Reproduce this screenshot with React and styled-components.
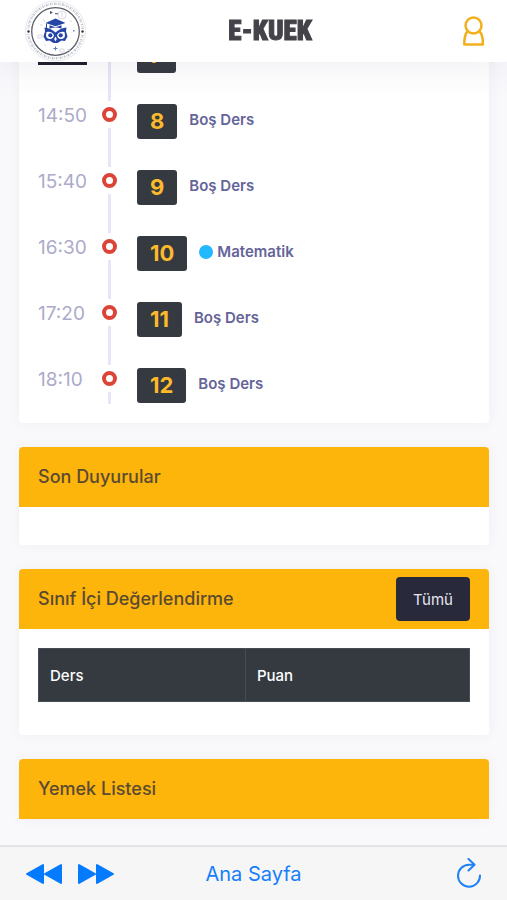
import styled, { createGlobalStyle } from 'styled-components'

const GlobalStyle = createGlobalStyle`
  * {
    box-sizing: border-box;
  }
  body {
    margin: 0;
    background: #f9f9fc;
    font-family: Inter, 'Open Sans', sans-serif;
    color: #646c9a;
  }
  button {
    border: 0;
    padding: 0;
    background: none;
    font: inherit;
    cursor: pointer;
  }
  svg {
    display: block;
  }
`

const Header = styled.header`
  position: fixed;
  top: 0;
  left: 0;
  right: 0;
  z-index: 2;
  height: 62px;
  padding: 0 12px 0 24px;
  display: flex;
  align-items: center;
  justify-content: space-between;
  background: #fff;
  box-shadow: 0 0 40px rgba(82, 63, 105, 0.12);
`

const Brand = styled.h1`
  margin: 0;
  font-family: 'Liberation Sans Narrow', 'Roboto Condensed', Roboto, sans-serif;
  font-size: 27px;
  font-weight: 900;
  line-height: 32px;
  color: #434349;
  -webkit-text-stroke: 1px #434349;
`

const UserButton = styled.button`
  width: 42px;
  height: 42px;
  display: flex;
  align-items: center;
  justify-content: center;
`

const Page = styled.main`
  padding: 0 18px 80px 19px;
  display: flex;
  flex-direction: column;
  gap: 24px;
`

const Card = styled.section`
  background: #fff;
  border-radius: 4px;
  box-shadow: 0 0 13px rgba(82, 63, 105, 0.05);
`

const CardHead = styled.div`
  height: 60px;
  padding: 0 19px;
  display: flex;
  align-items: center;
  justify-content: space-between;
  background: #fdb40b;
  border-radius: 4px 4px 0 0;
`

const CardTitle = styled.h2`
  margin: 0;
  font-size: 18px;
  font-weight: 500;
  line-height: 24px;
  color: #5a4a32;
`

const CardBody = styled.div`
  min-height: 38px;
  padding: ${({ $filled }) => ($filled ? '19px 19px 33px' : '0')};
`

const AllButton = styled.button`
  width: 74px;
  height: 44px;
  border-radius: 4px;
  background: #282a3c;
  color: #e6e6ee;
  font-size: 15px;
`

const Lessons = styled.ol`
  list-style: none;
  margin: 0;
  padding: 35px 19px 19px;
`

const Lesson = styled.li`
  display: grid;
  grid-template-columns: 64px 15px 1fr;
  padding-right: 19px;
`

const Time = styled.time`
  justify-self: start;
  align-self: start;
  height: 30px;
  font-size: 19px;
  line-height: 30px;
  color: #acabc9;
  ${({ $current }) => $current && 'background: #1e1e2d; color: #fff;'}
`

const Rail = styled.div`
  padding-top: 6px;
  display: flex;
  flex-direction: column;
  align-items: center;
  gap: 6px;
`

const Ring = styled.span`
  width: 15px;
  height: 15px;
  border: 4px solid #db4437;
  border-radius: 50%;
`

const Line = styled.span`
  flex: 1;
  width: 3px;
  background: #e6e6f6;
`

const Detail = styled.div`
  padding: 3px 0 28px 20px;
  display: flex;
  align-items: flex-start;
  gap: 12px;

  ${Lesson}:last-child & {
    padding-bottom: 1px;
  }
`

const Badge = styled.span`
  height: 35px;
  padding: 0 13px;
  border-radius: 3px;
  background: #343a40;
  color: #fdb92c;
  font-size: 22px;
  font-weight: 700;
  line-height: 34px;
`

const Subject = styled.span`
  display: flex;
  align-items: center;
  gap: 4px;
  font-size: 15px;
  font-weight: 600;
  line-height: 32px;
  color: #646499;
`

const Dot = styled.span`
  width: 14px;
  height: 14px;
  border-radius: 50%;
  background: #22b9ff;
`

const Table = styled.table`
  width: 100%;
  border-collapse: collapse;
  background: #343a40;
  color: #fff;

  th {
    height: 53px;
    padding: 0 11px;
    border: 1px solid #454d55;
    font-size: 15px;
    font-weight: 500;
    text-align: left;
  }
  th:first-child {
    width: 48%;
  }
`

const Toolbar = styled.footer`
  position: fixed;
  bottom: 0;
  left: 0;
  right: 0;
  z-index: 2;
  height: 55px;
  padding: 0 25px;
  display: grid;
  grid-template-columns: 1fr auto 1fr;
  align-items: center;
  background: #f7f6f7;
  border-top: 2px solid #e4e4e7;
`

const Arrows = styled.nav`
  display: flex;
  gap: 16px;
`

const HomeLink = styled.a`
  font-size: 20px;
  line-height: 28px;
  color: #147efb;
  text-decoration: none;
`

const ReloadButton = styled.button`
  justify-self: end;
`

const Logo = () => (
  <svg width="63" height="62" viewBox="0 0 63 62" role="img" aria-label="Okul logosu">
    <circle cx="31.5" cy="31" r="30" fill="#fff" stroke="#e6e7ec" strokeWidth="1" />
    <circle cx="31.5" cy="31" r="27.3" fill="none" stroke="#c3c5cf" strokeWidth="2.4" strokeDasharray="1.3 .9 .7 1 1.7 .8 .6 1.2" />
    <circle cx="31.5" cy="31.5" r="23.8" fill="#fff" stroke="#5d5f68" strokeWidth="1.3" />
    <circle cx="4.5" cy="31.5" r="2.4" fill="#fff" />
    <circle cx="58.5" cy="31.5" r="2.4" fill="#fff" />
    <circle cx="4.5" cy="31.5" r="1.2" fill="#333" />
    <circle cx="58.5" cy="31.5" r="1.2" fill="#333" />
    <g fill="none" stroke="#c9ccd8" strokeWidth=".7">
      <circle cx="38" cy="15" r="4" />
      <path d="M38 12.500v5M19 19l2 3M16 25h3M14 35h4v3h-4zM36 49h4v3h-4zM43 49l3 2M20 44l2 2M46 20l2 2" />
    </g>
    <path d="M26 11l3 1.500-3 1.500zM31 13.200h3v1h-3z" fill="#444b66" />
    <g fill="#2546a6">
      <path d="M21.500 23l10-4.500 10 4.500-10 3.200z" />
      <path d="M25.500 25.200l6 2 6-2v3.600q-6-2.600-12 0z" />
      <path d="M22 23.500h1v4.500h-1z" />
      <path d="M20.500 27.500q6 .5 11 5 5-4.500 11-5l-.5 4 1.500 5-2.500 4.500-3.500-.5-4 2.500h-4l-4-2.500-3.500.5-2.500-4.500 1.500-5z" />
      <path d="M31 46.500h1v4h-1zM29.500 48h4v1h-4zM49 30h1.500v1.500h-1.500z" opacity=".7" />
    </g>
    <g fill="#fff">
      <path d="M22.500 32q5-1 7.500 3-.5 4-4 4-3.800-.3-4-3.500zM40.500 32q-5-1-7.500 3 .5 4 4 4 3.800-.3 4-3.500z" />
      <path d="M31.500 36.500l-1.300 2.500 1.300 2.500 1.300-2.500z" />
    </g>
    <g fill="#2546a6">
      <circle cx="26.300" cy="35.300" r="2.100" />
      <circle cx="36.700" cy="35.300" r="2.100" />
    </g>
  </svg>
)

const UserIcon = () => (
  <svg width="22" height="31" viewBox="0 0 22 31" fill="none" stroke="#f2b11c" strokeWidth="2.5" strokeLinejoin="round">
    <circle cx="10.500" cy="9.500" r="8" />
    <path d="M4.500 15.500C1.800 18 1.300 22.500 1.300 28.500h18.600c0-6-.5-10.500-3.300-13" />
  </svg>
)

const SkipIcon = ({ back }) => (
  <svg width="37" height="22" viewBox="0 0 37 22" fill="#047bff" stroke="#047bff" strokeWidth="2" strokeLinejoin="round">
    {back ? (
      <path d="M18 2v18L2 11zM36 2v18L20 11z" />
    ) : (
      <path d="M1 2v18l16-9zM19 2v18l16-9z" />
    )}
  </svg>
)

const ReloadIcon = () => (
  <svg width="26" height="31" viewBox="0 0 26 31" fill="none" stroke="#1c82f5" strokeWidth="2" strokeLinecap="round" strokeLinejoin="round">
    <path d="M18 6.700H13A11 11 0 1 0 24 17.500" />
    <path d="M12.500 1l6 5.700-6 5.800" />
  </svg>
)

const lessons = [
  { time: '14:00', no: 7, name: 'Boş Ders', current: true },
  { time: '14:50', no: 8, name: 'Boş Ders' },
  { time: '15:40', no: 9, name: 'Boş Ders' },
  { time: '16:30', no: 10, name: 'Matematik', busy: true },
  { time: '17:20', no: 11, name: 'Boş Ders' },
  { time: '18:10', no: 12, name: 'Boş Ders' },
]

const App = () => {
  return (
    <>
      <GlobalStyle />
      <Header>
        <Logo />
        <Brand>E-KUEK</Brand>
        <UserButton aria-label="Profil">
          <UserIcon />
        </UserButton>
      </Header>
      <Page>
        <Card>
          <Lessons>
            {lessons.map(({ time, no, name, busy, current }) => (
              <Lesson key={no}>
                <Time $current={current}>{time}</Time>
                <Rail>
                  <Ring />
                  <Line />
                </Rail>
                <Detail>
                  <Badge>{no}</Badge>
                  <Subject>
                    {busy && <Dot />}
                    {name}
                  </Subject>
                </Detail>
              </Lesson>
            ))}
          </Lessons>
        </Card>
        <Card>
          <CardHead>
            <CardTitle>Son Duyurular</CardTitle>
          </CardHead>
          <CardBody />
        </Card>
        <Card>
          <CardHead>
            <CardTitle>Sınıf İçi Değerlendirme</CardTitle>
            <AllButton>Tümü</AllButton>
          </CardHead>
          <CardBody $filled>
            <Table>
              <thead>
                <tr>
                  <th scope="col">Ders</th>
                  <th scope="col">Puan</th>
                </tr>
              </thead>
            </Table>
          </CardBody>
        </Card>
        <Card>
          <CardHead>
            <CardTitle>Yemek Listesi</CardTitle>
          </CardHead>
        </Card>
      </Page>
      <Toolbar>
        <Arrows>
          <button aria-label="Geri">
            <SkipIcon back />
          </button>
          <button aria-label="İleri">
            <SkipIcon />
          </button>
        </Arrows>
        <HomeLink href="#">Ana Sayfa</HomeLink>
        <ReloadButton aria-label="Yenile">
          <ReloadIcon />
        </ReloadButton>
      </Toolbar>
    </>
  )
}
export default App
